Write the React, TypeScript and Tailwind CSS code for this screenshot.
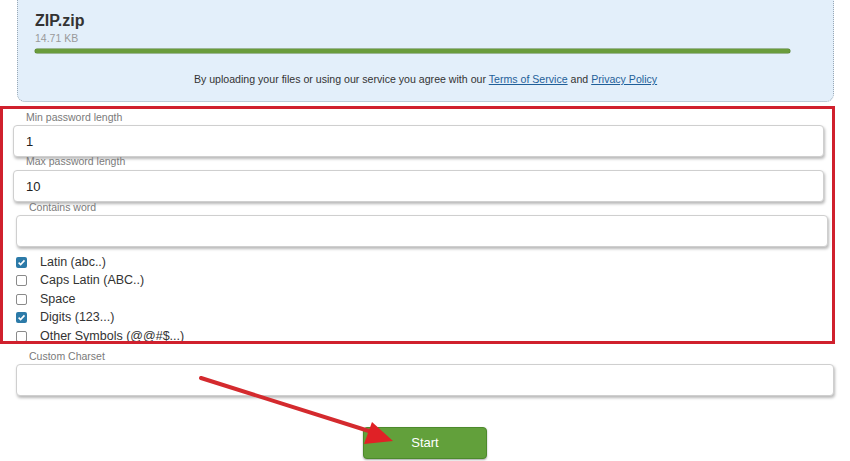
import { useState } from 'react';

const inputCls =
    'block h-[32px] bg-white border border-[#cfcfcf] rounded-[4px] shadow-[1px_2px_3px_rgba(0,0,0,0.28)] px-[12px] text-[13px] text-[#222] outline-none';

const labelCls = 'text-[10.5px] leading-[14px] text-[#7a7a7a]';

function Check({ checked, label, onToggle }: { checked: boolean; label: string; onToggle: () => void }) {
    return (
        <div className="flex items-center h-[18.5px] cursor-pointer" onClick={onToggle}>
            <span
                className={
                    checked
                        ? 'ml-[16px] w-[11px] h-[11px] rounded-[2px] bg-[#2c7aa8] flex items-center justify-center'
                        : 'ml-[16px] w-[11px] h-[11px] rounded-[2px] bg-white border border-[#8a8a8a]'
                }
            >
                {checked && (
                    <svg width="9" height="9" viewBox="0 0 10 10">
                        <path d="M1.8 5.2 L4 7.3 L8.3 2.6" fill="none" stroke="white" strokeWidth="1.8" />
                    </svg>
                )}
            </span>
            <span className="ml-[13px] text-[12.5px] text-[#333]">{label}</span>
        </div>
    );
}

export default function App() {
    const [checks, setChecks] = useState([true, false, false, true, false]);
    const labels = ['Latin (abc..)', 'Caps Latin (ABC..)', 'Space', 'Digits (123...)', 'Other Symbols (@@#$...)'];

    const toggle = (i: number) => setChecks(prev => prev.map((c, j) => (j === i ? !c : c)));

    return (
        <div className="relative w-[850px] h-[461px] overflow-hidden bg-white font-['Liberation_Sans',Arial,sans-serif]">
            {/* upload box */}
            <div className="ml-[17px] w-[817px] -mt-[20px] h-[122px] bg-[#e3effa] border border-dotted border-[#9aa9b6] rounded-b-[8px] pt-[31px]">
                <div className="ml-[17px] text-[16px] font-bold text-[#333] leading-[18px]">ZIP.zip</div>
                <div className="ml-[17px] text-[10.5px] text-[#9a9a9a] leading-[14px] mt-[1px]">14.71 KB</div>
                <div className="ml-[17px] w-[755px] h-[4px] mt-[4px] rounded-full bg-[#6a9c3c] shadow-[0_0_0_0.5px_#557f2f]" />
                <div className="mt-[19px] text-center text-[10.6px] text-[#333] leading-[14px]">
                    By uploading your files or using our service you agree with our{' '}
                    <a className="text-[#1f5f99] underline">Terms of Service</a> and{' '}
                    <a className="text-[#1f5f99] underline">Privacy Policy</a>
                </div>
            </div>

            {/* form */}
            <div className="pt-[8px]">
                <div className={labelCls + ' ml-[26px]'}>Min password length</div>
                <input className={inputCls + ' ml-[13px] w-[811px] mt-[1px]'} defaultValue="1" />
                <div className={labelCls + ' ml-[26px] -mt-[3px]'}>Max password length</div>
                <input className={inputCls + ' ml-[13px] w-[811px] mt-[2px]'} defaultValue="10" />
                <div className={labelCls + ' ml-[29px] -mt-[2px]'}>Contains word</div>
                <input className={inputCls + ' ml-[16px] w-[812px] mt-[1px]'} />

                <div className="mt-[6px]">
                    {labels.map((l, i) => (
                        <Check key={l} label={l} checked={checks[i]} onToggle={() => toggle(i)} />
                    ))}
                </div>

                <div className={labelCls + ' ml-[29px] mt-[3.5px]'}>Custom Charset</div>
                <input className={inputCls + ' ml-[16px] w-[818px] mt-[1px]'} />

                <button className="block ml-[363px] mt-[31px] w-[124px] h-[32px] rounded-[4px] bg-[#62a03b] border border-[#4d8a2c] shadow-[0_1px_2px_rgba(0,0,0,0.35)] text-white text-[13px]">
                    Start
                </button>
            </div>

            {/* annotations */}
            <div className="absolute left-0 top-[106px] w-[835px] h-[238px] border-[3px] border-[#d0202d] pointer-events-none" />
            <svg className="absolute left-0 top-0 pointer-events-none" width="850" height="461">
                <line x1="201" y1="378" x2="372" y2="432" stroke="#d42a2e" strokeWidth="4" strokeLinecap="round" />
                <polygon points="393,441 364,444 372,422" fill="#e02126" />
            </svg>
        </div>
    );
}
